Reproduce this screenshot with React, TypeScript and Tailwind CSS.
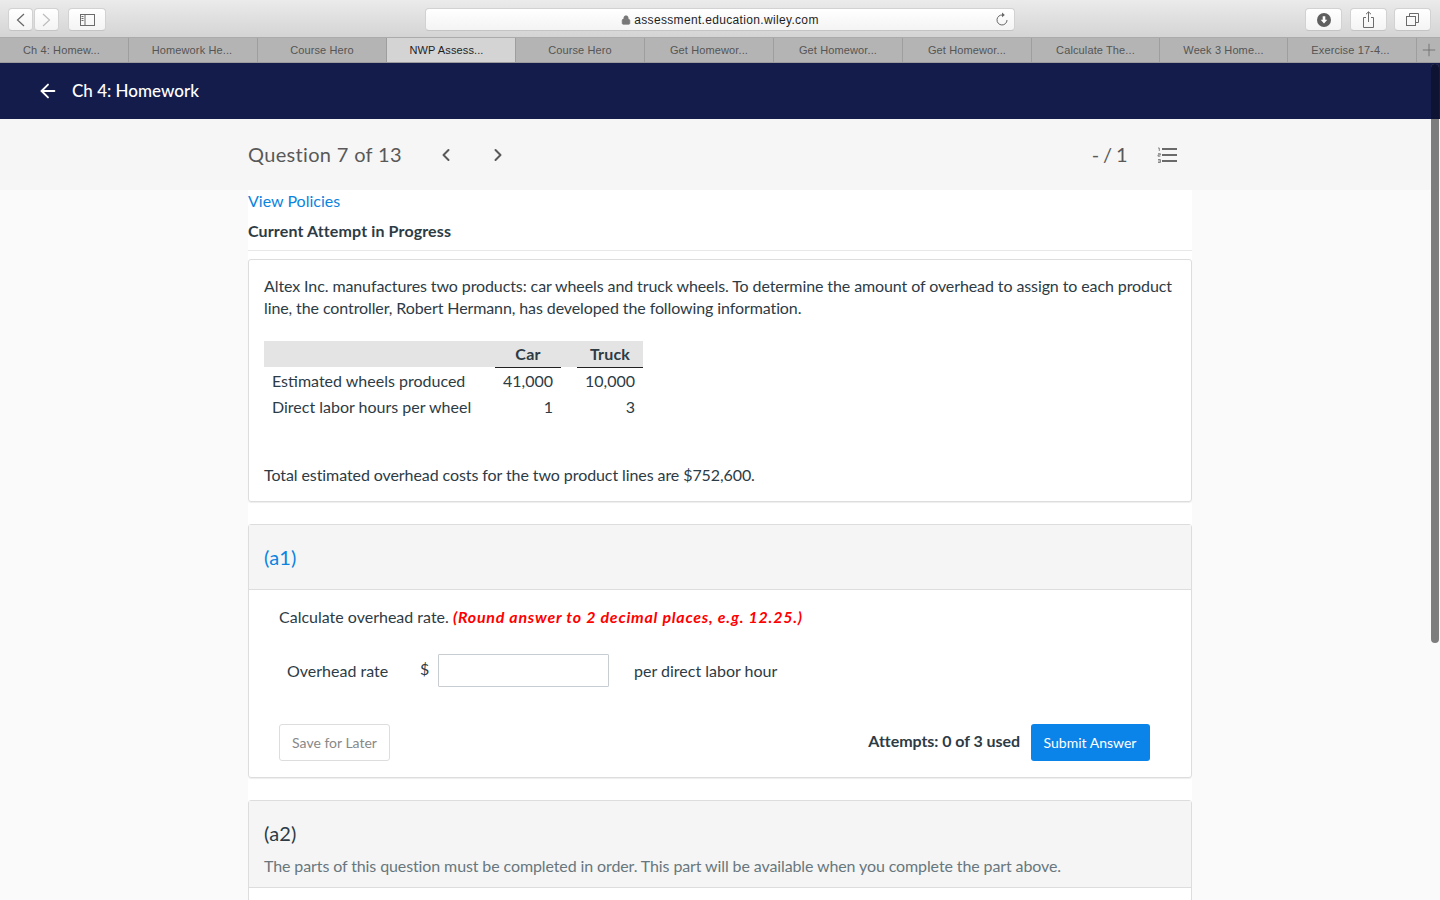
import React from 'react';
import { ArrowLeft, ChevronLeft, ChevronRight, Plus, Lock } from 'lucide-react';

const tabs = [
  { label: 'Ch 4: Homew...', className: 'w-[129px] pr-[5px]' },
  { label: 'Homework He...', className: 'w-[129px] pr-[2px]' },
  { label: 'Course Hero', className: 'w-[129px]' },
  { label: 'NWP Assess...', className: 'w-[129px] pr-[9px]' },
  { label: 'Course Hero', className: 'w-[129px]' },
  { label: 'Get Homewor...', className: 'w-[129px]' },
  { label: 'Get Homewor...', className: 'w-[129px]' },
  { label: 'Get Homewor...', className: 'w-[129px]' },
  { label: 'Calculate The...', className: 'w-[128px]' },
  { label: 'Week 3 Home...', className: 'w-[128px]' },
  { label: 'Exercise 17-4...', className: 'w-[129px] pr-[3px]' },
];

const ToolButton: React.FC<{ className?: string; children: React.ReactNode }> = ({ className = '', children }) => (
  <div className={`h-[23px] flex items-center justify-center rounded-[4px] bg-gradient-to-b from-white to-[#f4f4f4] border border-[#d2d2d2] border-b-[#c4c4c4] ${className}`}>
    {children}
  </div>
);

const BrowserChrome = () => (
  <div className="font-['Liberation_Sans',sans-serif]">
    <div className="h-[38px] bg-gradient-to-b from-[#ebebeb] to-[#d4d4d4] flex items-start pt-[8px] pl-[8px] pr-[4px] border-b border-[#ababab]">
      <ToolButton className="w-[25px]">
        <svg width="9" height="14" viewBox="0 0 9 14" fill="none" stroke="#666666" strokeWidth="1.2">
          <path d="M8 1 1.5 7 8 13" />
        </svg>
      </ToolButton>
      <ToolButton className="w-[25px] ml-px">
        <svg width="9" height="14" viewBox="0 0 9 14" fill="none" stroke="#bdbdbd" strokeWidth="1.2">
          <path d="M1 1l6.5 6L1 13" />
        </svg>
      </ToolButton>
      <ToolButton className="w-[38px] ml-[9px]">
        <svg width="15" height="12" viewBox="0 0 15 12" fill="none" stroke="#6b6b6b" strokeWidth="1">
          <rect x="0.5" y="0.5" width="14" height="11" />
          <path d="M5 0.5v11M1.5 2.5h2M1.5 4.5h2M1.5 6.5h2" />
        </svg>
      </ToolButton>
      <ToolButton className="w-[590px] ml-[319px] relative">
        <div className="flex items-center gap-[3px] text-[12px] tracking-[0.33px] text-[#1e1e1e]">
          <Lock size={10} className="text-[#777777]" fill="#777777" />
          <span>assessment.education.wiley.com</span>
        </div>
        <svg width="12" height="14" viewBox="0 0 12 14" fill="none" stroke="#666666" strokeWidth="1" className="absolute right-[6px] top-[3px]">
          <path d="M6.5 3A5 5 0 1 0 11 8" />
          <path d="M6 .5 8.8 3 6 5.2z" fill="#666666" stroke="none" />
        </svg>
      </ToolButton>
      <ToolButton className="w-[37px] ml-[290px]">
        <svg width="14" height="14" viewBox="0 0 14 14">
          <circle cx="7" cy="7" r="7" fill="#5f5f5f" />
          <path d="M5.7 3.2h2.6v3.6h2L7 10.6 3.7 6.8h2z" fill="#fff" />
        </svg>
      </ToolButton>
      <ToolButton className="w-[37px] ml-[8px]">
        <svg width="13" height="17" viewBox="0 0 13 17" fill="none" stroke="#6b6b6b" strokeWidth="1">
          <path d="M4 6.5H1.5v10h10v-10H9M6.5 11V1M4 3.2 6.5 .8 9 3.2" />
        </svg>
      </ToolButton>
      <ToolButton className="w-[37px] ml-[7px]">
        <svg width="13" height="13" viewBox="0 0 13 13" fill="none" stroke="#6b6b6b" strokeWidth="1">
          <rect x="0.5" y="3.5" width="9" height="9" />
          <path d="M3.5 3.5v-3h9v9h-3" />
        </svg>
      </ToolButton>
    </div>
    <div className="h-[25px] flex bg-[#b4b4b4] border-b border-[#9c9c9c] text-[11px] tracking-[0.12px]">
      {tabs.map((tab, i) => (
        <div
          key={i}
          className={`shrink-0 flex items-center justify-center border-r border-[#9e9e9e] ${tab.className} ${
            i === 3 ? 'bg-[#d4d4d4] text-[#1f1f1f]' : 'text-[#555555]'
          }`}
        >
          {tab.label}
        </div>
      ))}
      <div className="flex-1 flex items-center justify-center">
        <Plus size={20} strokeWidth={1} className="text-[#6a6a6a]" />
      </div>
    </div>
  </div>
);

const QuestionList = () => (
  <svg width="20" height="16" viewBox="0 0 20 16" className="text-[#6a6a6a]" fill="none" stroke="currentColor">
    <path d="M5 2h15M5 8h15M5 14h15" strokeWidth="2" />
    <path d="M1 1h1.3v3M1 6.7h2.4v1.2H1v1.3h2.4M1 12.5h2.4v3H1M1 14h2.4" strokeWidth="0.8" />
  </svg>
);

const OverheadTable = () => (
  <table className="mt-[22px] border-collapse">
    <thead>
      <tr className="bg-[#e4e4e4] h-[26px]">
        <th className="w-[231px] p-0" />
        <th className="w-[66px] p-0 font-bold text-center tracking-[0.2px] border-b border-[#222222]">Car</th>
        <th className="w-[16px] p-0" />
        <th className="w-[66px] p-0 font-bold text-center tracking-[0.2px] border-b border-[#222222]">Truck</th>
      </tr>
    </thead>
    <tbody>
      <tr className="h-[27px]">
        <td className="pl-[8px]">Estimated wheels produced</td>
        <td className="pr-[8px] text-right">41,000</td>
        <td />
        <td className="pr-[8px] text-right">10,000</td>
      </tr>
      <tr className="h-[26px]">
        <td className="pl-[8px]">Direct labor hours per wheel</td>
        <td className="pr-[8px] text-right">1</td>
        <td />
        <td className="pr-[8px] text-right">3</td>
      </tr>
    </tbody>
  </table>
);

export default function App() {
  return (
    <div className="h-[900px] overflow-hidden bg-[#fafafa] relative font-['Lato',sans-serif] text-[16px] text-[#2d3b45]">
      <BrowserChrome />

      <div className="h-[56px] bg-[#141c4c] flex items-center pl-[37px] text-white">
        <ArrowLeft size={22} strokeWidth={2} />
        <span className="ml-[13px] text-[17px] font-medium">Ch 4: Homework</span>
      </div>

      <div className="h-[71px] bg-[#f6f6f6]">
        <div className="w-[944px] mx-auto flex items-center h-full text-[#595959]">
          <span className="text-[20px] tracking-[0.33px] -mt-px">Question 7 of 13</span>
          <ChevronLeft size={20} strokeWidth={2.4} className="ml-[34px]" />
          <ChevronRight size={20} strokeWidth={2.4} className="ml-[32px]" />
          <span className="ml-auto text-[20px] tracking-[-0.6px] -mt-px">- / 1</span>
          <div className="ml-[30px] mr-[15px]">
            <QuestionList />
          </div>
        </div>
      </div>

      <div className="w-[944px] mx-auto bg-white">
        <div className="h-[61px] border-b border-[#e8e8e8]">
          <a className="block h-[22px] leading-[22px] text-[#0a84e0]">View Policies</a>
          <div className="mt-[8px] font-bold leading-[22px] text-[#2d3b45] tracking-[0.13px]">Current Attempt in Progress</div>
        </div>

        <div className="mt-[8px] h-[243px] border border-[#dddddd] rounded-[3px] px-[15px] pt-[15px] leading-[22px] shadow-[0_1px_1px_#eeeeee]">
          <p className="tracking-[-0.1px]">
            Altex Inc. manufactures two products: car wheels and truck wheels. To determine the amount of overhead to assign to each product line, the controller, Robert Hermann, has developed the following information.
          </p>
          <OverheadTable />
          <p className="mt-[44px] tracking-[-0.085px]">Total estimated overhead costs for the two product lines are $752,600.</p>
        </div>

        <div className="mt-[22px] h-[254px] border border-[#dddddd] rounded-[3px] shadow-[0_1px_1px_#eeeeee]">
          <div className="h-[65px] bg-[#f5f5f5] border-b border-[#dddddd] flex items-center px-[15px] text-[20px] tracking-[0.2px] text-[#0a84e0]">
            (a1)
          </div>
          <div className="px-[30px] pt-[16px]">
            <p className="leading-[22px]">
              Calculate overhead rate. <em className="font-bold text-[#ff0000] tracking-[0.75px]">(Round answer to 2 decimal places, e.g. 12.25.)</em>
            </p>
            <div className="flex items-center mt-[26px] ml-[8px] h-[33px]">
              <span className="w-[133px]">Overhead rate</span>
              <span className="w-[18px] -mt-[4px]">$</span>
              <input className="w-[171px] h-[33px] border border-[#c7cdd1] bg-white rounded-[1px]" />
              <span className="ml-[25px]">per direct labor hour</span>
            </div>
            <div className="flex items-center mt-[37px] pr-[11px]">
              <button className="h-[37px] w-[111px] border border-[#dddddd] rounded-[3px] text-[14px] text-[#888888] bg-white">
                Save for Later
              </button>
              <span className="ml-auto font-bold -mt-[4px] tracking-[-0.05px]">Attempts: 0 of 3 used</span>
              <button className="ml-[11px] h-[37px] w-[119px] pr-[1px] rounded-[3px] bg-[#0a84e8] text-white text-[14px]">
                Submit Answer
              </button>
            </div>
          </div>
        </div>

        <div className="mt-[22px] h-[120px] border border-[#dddddd] rounded-[3px]">
          <div className="h-[87px] bg-[#f5f5f5] border-b border-[#dddddd] px-[15px] pt-[18px]">
            <div className="text-[20px] leading-[28px] tracking-[0.2px]">(a2)</div>
            <p className="mt-[8px] leading-[22px] text-[#68777d] tracking-[-0.11px]">
              The parts of this question must be completed in order. This part will be available when you complete the part above.
            </p>
          </div>
        </div>
      </div>

      <div className="absolute right-[1px] top-[64px] w-[8px] h-[579px] rounded-[4px] bg-[#7d7d7d] overflow-hidden">
        <div className="h-[55px] bg-[#0e1233]" />
      </div>
    </div>
  );
}
